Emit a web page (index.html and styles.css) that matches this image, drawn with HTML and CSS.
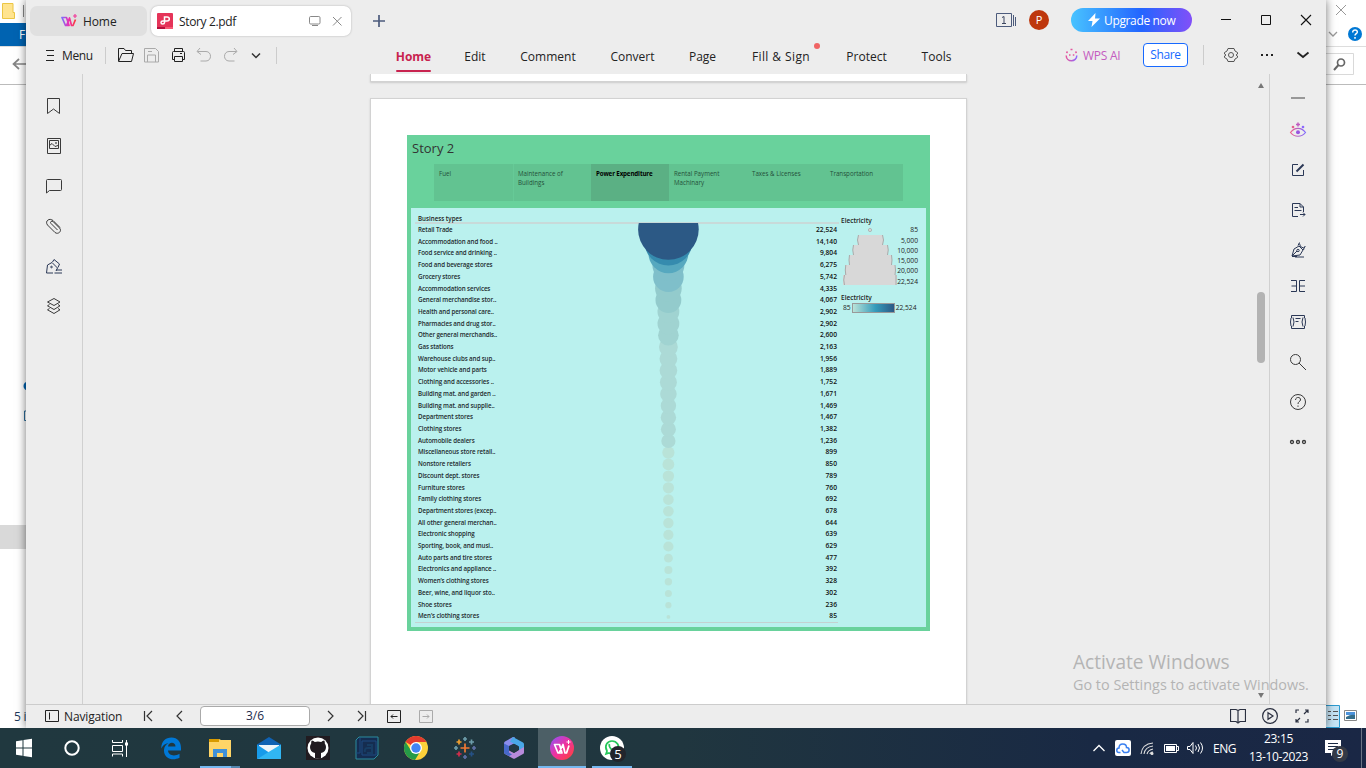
FILE: index.html
```html
<!DOCTYPE html>
<html lang="en">
<head>
<meta charset="utf-8">
<title>Story 2.pdf</title>
<link rel="stylesheet" href="styles.css">
</head>
<body>
<div class="desktop">

<section class="explorer">
  <div class="ex-title">
    <svg width="26" height="22" viewBox="0 0 26 22"><path d="M2.500 3.500h10.500v9h1.500v6h-12z" fill="#ffe48f" stroke="#ecc644"/><path d="M23.500 5v12" stroke="#888"/></svg>
    <svg width="40" height="22" viewBox="0 0 40 22"><path d="M10 5l10 10M20 5l-10 10" stroke="#999" fill="none"/></svg>
  </div>
  <div class="ex-ribbon">
    <span class="ex-file">File</span>
    <svg width="40" height="23" viewBox="0 0 40 23"><path d="M3 9l4 4 4-4" stroke="#999" fill="none" stroke-width="1.300"/><circle cx="29" cy="11" r="7" fill="#0078d4"/><path d="M26.700 9.500c0-3.600 4.900-3.200 4.600-.3-.2 1.500-2.300 1.500-2.300 3.300M29 14v1.700" stroke="#fff" stroke-width="1.500" fill="none"/></svg>
  </div>
  <div class="ex-address">
    <svg width="26" height="37" viewBox="0 0 26 37"><path d="M26 17H14m5-5l-5.500 5 5.500 5" fill="none" stroke="#858585" stroke-width="1.700"/></svg>
    <svg width="40" height="37" viewBox="0 0 40 37"><path d="M0 6.500h27.500v21H0" fill="none" stroke="#d9d9d9"/><circle cx="15" cy="15.500" r="3.500" fill="none" stroke="#666" stroke-width="1.700"/><path d="M12.500 18L8 23" stroke="#666" stroke-width="2"/></svg>
  </div>
  <div class="ex-body">
    <svg width="26" height="44" viewBox="0 0 26 44"><circle cx="28" cy="6" r="4.500" fill="#0063b1"/><path d="M24.500 31V40.500H28M24.500 31H28M24 44.500h3" stroke="#2b6e9d" fill="none"/></svg>
    <div class="ex-selected"></div>
  </div>
  <div class="ex-status">
    <span>5 items</span>
    <svg width="40" height="23" viewBox="0 0 40 23"><path d="M-1 .5h14.500v22H-1z" fill="#c5e4f5" stroke="#2c9bd0"/><path d="M2 6.500h3m2 0h5M2 10.500h3m2 0h5M2 14.500h3m2 0h5" stroke="#555"/><path d="M18.500 5.500h12v10h-12z" fill="#fff" stroke="#888"/><path d="M20 7h9v3h-9z" fill="#4c93db"/><path d="M20 12q5-3 9-2v4h-9z" fill="#356e8b"/></svg>
  </div>
</section>

<main class="app">
  <header class="titlebar">
    <div class="tab tab-home">
      <svg width="16" height="14" viewBox="0 0 16 14"><defs><linearGradient id="wg"><stop offset="0" stop-color="#7b6cff"/><stop offset=".5" stop-color="#f02db0"/><stop offset="1" stop-color="#fb3a3a"/></linearGradient></defs><path d="M1 3.500h4.500L8 11.500H4.500zM5.500 11.500L8.500 4l2 7.500h1.500L14.500 5.500" fill="none" stroke="url(#wg)" stroke-width="1.700" stroke-linejoin="round"/><path d="M14 0v4M12 2h4" stroke="#f03b9a" stroke-width="1.200"/></svg>
      <span>Home</span>
    </div>
    <div class="tab tab-doc">
      <svg width="16" height="16" viewBox="0 0 16 16"><rect width="16" height="16" rx="1" fill="#e53459"/><path d="M0 14h8v2H0z" fill="#b40f3c"/><path d="M8 14h8v2H8z" fill="#f85a74"/><path d="M7.500 10V4H10q2.300 0 2.300 2T10 8H5.800Q4 8 4 9.500T5.700 11q1.800 0 1.800-1.500" fill="none" stroke="#fff" stroke-width="1.500"/></svg>
      <span class="doc-name">Story 2.pdf</span>
      <svg width="12" height="12" viewBox="0 0 12 12" fill="none" stroke="#888"><rect x=".5" y="1.500" width="10.500" height="7.500" rx="1.200"/><path d="M3 10.500h6"/></svg>
      <svg width="10" height="10" viewBox="0 0 10 10" stroke="#888" fill="none"><path d="M1 1l8.500 8.500M9.500 1L1 9.500"/></svg>
    </div>
    <svg class="plus" width="12" height="12" viewBox="0 0 12 12"><path d="M6 0v12M0 6h12" stroke="#4c5b7c" stroke-width="1.700"/></svg>
    <div class="title-right">
      <svg width="21" height="14" viewBox="0 0 21 14" stroke="#4c5b7c" fill="none"><path d="M.5.500h15v13H.5zM17.500 2v11M19.500 4v9"/><path d="M6 4.500l2-1v7M6 10.500h4" stroke="#3c4660"/></svg>
      <span class="avatar">P</span>
      <div class="upgrade"><svg width="12" height="14" viewBox="0 0 12 14"><path d="M7.500 0L0 8h4.500L3.500 14 12 5.500H7z" fill="#fff"/></svg><span>Upgrade now</span></div>
      <div class="win-buttons">
        <svg width="40" height="40" viewBox="0 0 40 40"><path d="M15 19.500h10" stroke="#111"/></svg>
        <svg width="40" height="40" viewBox="0 0 40 40"><path d="M15.500 15.500h9v9h-9z" stroke="#111" fill="none"/></svg>
        <svg width="40" height="40" viewBox="0 0 40 40"><path d="M15 15l10 10M25 15L15 25" stroke="#111" stroke-width="1.100"/></svg>
      </div>
    </div>
  </header>

  <nav class="toolbar">
    <div class="menu"><svg width="9" height="11" viewBox="0 0 9 11"><path d="M0 .5h8M1 5.500h7M0 10.500h8" stroke="#222"/></svg><span>Menu</span></div>
    <div class="quick">
      <svg width="26" height="26" viewBox="0 0 26 26" stroke="#222"><path d="M5.500 19V6.500H11l1.500 2h6V11M5.500 19.500L9 11.500h11.500l-2 8z"/></svg>
      <svg width="26" height="26" viewBox="0 0 26 26" stroke="#aaa"><path d="M5.500 6.500h11l3 3v10.500h-14zM8.500 20v-7h8v7M9 9.500h4"/></svg>
      <svg width="26" height="26" viewBox="0 0 26 26" stroke="#222"><path d="M9.500 9.500V6.500h8v3M9.500 17.500h-2v-7q0-1 1-1h10q1 0 1 1v7h-2M9.500 14.500h8v5h-8zM15 11.500h2"/></svg>
      <svg width="26" height="26" viewBox="0 0 26 26" stroke="#aaa"><path d="M9 6L6 9.500l4 3M6.500 9.500H15c6 0 6 9.500 0 9.500h-5.500"/></svg>
      <svg width="26" height="26" viewBox="0 0 26 26" stroke="#aaa"><path d="M17 6l3 3.500-4 3M19.500 9.500H12c-6 0-6 9.500 0 9.500h5.500"/></svg>
      <svg width="26" height="26" viewBox="0 0 26 26" stroke="#333" stroke-width="1.500"><path d="M9 11.500l4 4 4-4"/></svg>
    </div>
    <div class="ribbon-tabs">
      <span class="active">Home</span><span>Edit</span><span>Comment</span><span>Convert</span><span>Page</span><span class="notice">Fill &amp; Sign</span><span>Protect</span><span>Tools</span>
    </div>
    <div class="wps-ai">
      <svg width="13" height="14" viewBox="0 0 13 14" fill="none"><defs><linearGradient id="ai"><stop offset="0" stop-color="#e4569f"/><stop offset="1" stop-color="#8d68ff"/></linearGradient></defs><path d="M1.200 7.500c0 7 10.600 7 10.600 0" stroke="url(#ai)" stroke-width="1.500"/><path d="M4 7h1.500M7.800 7h1.500M1.500 5l1-1.500M5.500 1.500h2M10.500 3.500l1 1.500" stroke="#e4569f" stroke-width="1.500"/></svg>
      <span>WPS AI</span>
    </div>
    <span class="share">Share</span>
    <div class="tool-right">
      <svg width="36" height="26" viewBox="0 0 36 26" stroke="#555" fill="none"><path d="M15 6.500h6l1 2.500 2.500 1.500V12l-1.500 1 1.500 1v1.500L22 17l-1 2.500h-6L14 17l-2.500-1.500V14l1.500-1-1.500-1v-1.500L14 9z"/><circle cx="18" cy="13" r="2.500"/></svg>
      <svg width="36" height="26" viewBox="0 0 36 26"><path d="M12 12h2v2h-2zM17 12h2v2h-2zM22 12h2v2h-2z" fill="#222"/></svg>
      <svg width="36" height="26" viewBox="0 0 36 26" stroke="#222" stroke-width="1.800" fill="none"><path d="M12.500 10.500l5.500 4.500 5.500-4.500"/></svg>
    </div>
  </nav>

  <div class="workspace">
    <aside class="left-bar">
      <svg width="20" height="40" viewBox="0 0 20 40"><path d="M4.500 12.500h12v15l-6-4.500-6 4.500z"/></svg>
      <svg width="20" height="40" viewBox="0 0 20 40"><path d="M4.500 12.500h13v15h-13zM6.500 14.500h9v8h-9zM6.500 19.500l2.500-2 3 3 3-1"/><circle cx="13" cy="17" r=".5"/></svg>
      <svg width="20" height="40" viewBox="0 0 20 40"><path d="M3.500 27V14.500q0-1 1-1h13q1 0 1 1v9q0 1-1 1H6.500z"/></svg>
      <svg width="20" height="40" viewBox="0 0 20 40"><path d="M14.500 24L8 17.500q-1-1 0-2t2 0l6.500 6.500c3 3-1.500 7-4.500 4.500L4.500 19c-3-4 2-7.500 5.500-4.500l7 7"/></svg>
      <svg class="navy" width="20" height="40" viewBox="0 0 20 40"><path d="M10 27H3.500l1-8 4.500-2.500 5.500 5.500-1.500 3M9.500 16l1.500-2.500 5.500 4.500-1.500 3.500M13 24h6M11.500 27h7.500"/><circle cx="8.500" cy="21" r=".8"/></svg>
      <svg width="20" height="40" viewBox="0 0 20 40"><path d="M11 12.500l6 3.500-6 3.500L4.500 16zM6.500 18.500l-2 1.300 6.500 3.700 6-3.700-2-1.300M6.500 22.500l-2 1.300 6.500 3.700 6-3.700-2-1.300"/></svg>
    </aside>

    <div class="viewport">
      <div class="page page-prev"></div>
      <div class="page page-current">
        <article class="story">
          <h1>Story 2</h1>
          <ul class="story-nav">
            <li>Fuel</li><li>Maintenance of Buildings</li><li class="current">Power Expenditure</li><li>Rental Payment Machinary</li><li>Taxes &amp; Licenses</li><li>Transportation</li>
          </ul>
          <div class="dash">
            <section class="chart">
              <div class="chart-head">Business types</div>
              <div class="chart-body">
                <ul class="labels">
                  <li>Retail Trade</li><li>Accommodation and food ..</li><li>Food service and drinking ..</li><li>Food and beverage stores</li><li>Grocery stores</li><li>Accommodation services</li><li>General merchandise stor..</li><li>Health and personal care..</li><li>Pharmacies and drug stor..</li><li>Other general merchandis..</li><li>Gas stations</li><li>Warehouse clubs and sup..</li><li>Motor vehicle and parts</li><li>Clothing and accessories ..</li><li>Building mat. and garden ..</li><li>Building mat. and supplie..</li><li>Department stores</li><li>Clothing stores</li><li>Automobile dealers</li><li>Miscellaneous store retail..</li><li>Nonstore retailers</li><li>Discount dept. stores</li><li>Furniture stores</li><li>Family clothing stores</li><li>Department stores (excep..</li><li>All other general merchan..</li><li>Electronic shopping</li><li>Sporting, book, and musi..</li><li>Auto parts and tire stores</li><li>Electronics and appliance ..</li><li>Women’s clothing stores</li><li>Beer, wine, and liquor sto..</li><li>Shoe stores</li><li>Men’s clothing stores</li>
                </ul>
                <svg class="bubbles" width="70" height="399" viewBox="0 0 70 399">
                  <g fill="#b9e3d8"><circle cx="35.400" cy="393.900" r="1.900"/><circle cx="35.400" cy="382.200" r="3.100"/><circle cx="35.400" cy="370.400" r="3.500"/><circle cx="35.400" cy="358.700" r="3.700"/><circle cx="35.400" cy="347" r="4"/><circle cx="35.400" cy="335.200" r="4.400"/><circle cx="35.400" cy="323.500" r="5.100"/><circle cx="35.400" cy="311.800" r="5.100"/><circle cx="35.400" cy="300" r="5.200"/><circle cx="35.400" cy="288.300" r="5.300"/><circle cx="35.400" cy="276.600" r="5.300"/><circle cx="35.400" cy="264.800" r="5.600"/><circle cx="35.400" cy="253.100" r="5.700"/><circle cx="35.400" cy="241.400" r="5.900"/><circle cx="35.400" cy="229.600" r="6.100"/></g>
                  <g fill="#acdad6"><circle cx="35.400" cy="217.900" r="7.100"/><circle cx="35.400" cy="206.200" r="7.500"/><circle cx="35.400" cy="194.500" r="7.700"/><circle cx="35.400" cy="182.700" r="7.700"/><circle cx="35.400" cy="171" r="8.300"/><circle cx="35.400" cy="159.200" r="8.500"/><circle cx="35.400" cy="147.500" r="8.800"/><circle cx="35.400" cy="135.800" r="8.900"/><circle cx="35.400" cy="124" r="9.400"/></g>
                  <g fill="#a0d3d1"><circle cx="35.400" cy="112.300" r="10.300"/><circle cx="35.400" cy="100.600" r="10.900"/><circle cx="35.400" cy="88.800" r="10.900"/></g>
                  <g fill="#93cbcc"><circle cx="35.400" cy="77.100" r="12.900"/><circle cx="35.400" cy="65.400" r="13.300"/></g>
                  <g fill="#7fbfca"><circle cx="35.400" cy="53.700" r="15.300"/><circle cx="35.400" cy="42" r="16"/></g>
                  <circle cx="35.400" cy="30.200" r="20" fill="#56a8bf"/><circle cx="35.400" cy="18.500" r="24" fill="#358bae"/><circle cx="35.400" cy="6.500" r="30.300" fill="#2c5985"/>
                </svg>
                <ul class="values">
                  <li>22,524</li><li>14,140</li><li>9,804</li><li>6,275</li><li>5,742</li><li>4,335</li><li>4,067</li><li>2,902</li><li>2,902</li><li>2,600</li><li>2,163</li><li>1,956</li><li>1,889</li><li>1,752</li><li>1,671</li><li>1,469</li><li>1,467</li><li>1,382</li><li>1,236</li><li>899</li><li>850</li><li>789</li><li>760</li><li>692</li><li>678</li><li>644</li><li>639</li><li>629</li><li>477</li><li>392</li><li>328</li><li>302</li><li>236</li><li>85</li>
                </ul>
              </div>
            </section>
            <aside class="legend">
              <h2>Electricity</h2>
              <div class="size-legend">
                <svg width="56" height="64" viewBox="0 0 56 64"><circle cx="29" cy="5" r="1.600" fill="#d8d8d8" stroke="#aaa" stroke-width=".8"/><g fill="#d8d8d8"><path d="M17 10h25v10H17zM12 20h35v10H12zM8 30h43v10H8zM4 40h50v10H4zM2 50h54v10H2z"/></g><path d="M17.500 10q-2 5 0 10M41.500 10q2 5 0 10M12.500 20q-1.500 5 0 10M46.500 20q1.500 5 0 10M8.500 30q-1 5 0 10M50.500 30q1 5 0 10M4.800 40q-1 5 0 10M54 40q1 5 0 10M3.500 50q-1.500 5 0 10M55 50v10" fill="none" stroke="#aaa"/></svg>
                <ul><li>85</li><li>5,000</li><li>10,000</li><li>15,000</li><li>20,000</li><li>22,524</li></ul>
              </div>
              <h2>Electricity</h2>
              <div class="color-legend"><span>85</span><i></i><span>22,524</span></div>
            </aside>
          </div>
        </article>
      </div>
    </div>

    <div class="scroll">
      <svg width="6" height="5" viewBox="0 0 6 5"><path d="M0 5L3 0l3 5z" fill="#777"/></svg>
      <i class="thumb"></i>
      <svg width="6" height="5" viewBox="0 0 6 5"><path d="M0 0l3 5 3-5z" fill="#777"/></svg>
    </div>

    <aside class="right-bar">
      <svg width="20" height="16" viewBox="0 0 20 16"><path d="M3 8h14" stroke="#888" stroke-width="1.700"/></svg>
      <svg width="20" height="48" viewBox="0 0 20 48" stroke="none"><defs><linearGradient id="eye"><stop offset="0" stop-color="#f0608c"/><stop offset="1" stop-color="#7b68ff"/></linearGradient></defs><g class="plain"><path d="M2.500 26.500c4-5.500 11-5.500 15 0-4 5-11 5-15 0z" fill="none" stroke="url(#eye)" stroke-width="1.200"/><circle cx="10" cy="26.300" r="2" fill="#9a55df"/><path d="M10 16.500v4M8 18.500h4" stroke="#c05bc0" stroke-width="1.500"/><circle cx="5" cy="21" r="1.300" fill="#e5608e"/><circle cx="15" cy="21" r="1.300" fill="#8c68ff"/></g></svg>
      <svg class="navy" width="20" height="32" viewBox="0 0 20 32"><path d="M10 10.500H4.500v11h11V16"/><path d="M8.500 17.500l7-7" stroke-width="1.900"/></svg>
      <svg class="navy" width="20" height="48" viewBox="0 0 20 48"><path d="M10 30.500H4.500v-13H12l3.500 3.500v5M12 17.500V21h3.500M6.500 21.500H10M6.500 24.500h7M12 28.500h5M15 26.500l2 2-2 2"/></svg>
      <svg class="navy" width="20" height="34" viewBox="0 0 20 34"><path d="M4 22l2-7 5-3 4 4-3 5zM4 22l5-5M10 11.500l1.500-3M15.500 16l1-3.500M7 23h9M4 22.500h5M11.500 9.500l1 3 3 1.500 2-1.500"/><circle cx="10" cy="16.500" r="1.200"/></svg>
      <svg class="navy" width="20" height="36" viewBox="0 0 20 36"><path d="M3 12.500h5.500v11H3M3.500 18H8M17 12.500h-5.500v11H17M12 18h5"/></svg>
      <svg class="navy" width="20" height="36" viewBox="0 0 20 36"><path d="M3.500 14v-2.500h13V14M3.500 22v2.500h13V22M5 13.500q2 4.500 0 9M15 13.500q-2 4.500 0 9M3 14q-1 4 0 8M17 14q1 4 0 8M7.500 14.500h5M7.500 17.500h3"/></svg>
      <svg width="20" height="44" viewBox="0 0 20 44"><circle cx="7.500" cy="19.500" r="5"/><path d="M11 23l7 7"/></svg>
      <svg width="20" height="36" viewBox="0 0 20 36"><circle cx="10" cy="18" r="7.500"/><path d="M7.500 16c0-3.500 5.500-3.300 5 0-.3 1.700-2.500 1.500-2.500 4M10 21.500v1.300"/></svg>
      <svg width="20" height="44" viewBox="0 0 20 44" stroke-width="1.300"><circle cx="4" cy="22" r="1.500"/><circle cx="10" cy="22" r="1.500"/><circle cx="16" cy="22" r="1.500"/></svg>
    </aside>
  </div>

  <footer class="statusbar">
    <svg width="14" height="12" viewBox="0 0 14 12" stroke="#222" fill="none"><path d="M.5.500h13v11H.5zM4.500 2.500v7"/></svg>
    <span class="nav-label">Navigation</span>
    <svg class="first" width="10" height="12" viewBox="0 0 10 12" stroke="#333" fill="none"><path d="M1.500 1v10M9 1L4 6l5 5" stroke-width="1.200"/></svg>
    <svg class="prev" width="7" height="12" viewBox="0 0 7 12" stroke="#333" fill="none"><path d="M6 1L1 6l5 5" stroke-width="1.200"/></svg>
    <span class="page-no">3/6</span>
    <svg class="next" width="7" height="12" viewBox="0 0 7 12" stroke="#333" fill="none"><path d="M1 1l5 5-5 5" stroke-width="1.200"/></svg>
    <svg class="last" width="10" height="12" viewBox="0 0 10 12" stroke="#333" fill="none"><path d="M8.500 1v10M1 1l5 5-5 5" stroke-width="1.200"/></svg>
    <svg class="back" width="14" height="13" viewBox="0 0 14 13" stroke="#222" fill="none"><path d="M.5.500h13v12H.5zM10.500 6.500H4M6 4.500l-2 2 2 2"/></svg>
    <svg class="forward" width="14" height="13" viewBox="0 0 14 13" stroke="#aaa" fill="none"><path d="M.5.500h13v12H.5zM3.500 6.500H10M8 4.500l2 2-2 2"/></svg>
    <div class="view-icons">
      <svg width="16" height="16" viewBox="0 0 16 16"><path d="M8 2.500L6 1.500H.5v12H6l2 1.500 2-1.500h5.500v-12H10zM8 2.500V14"/></svg>
      <svg width="16" height="16" viewBox="0 0 16 16"><circle cx="8" cy="8" r="7.400"/><path d="M6 4.700l5 3.300-5 3.300z"/></svg>
      <svg width="16" height="16" viewBox="0 0 16 16"><path d="M2 5V2h3M11 2h3v3M14 11v3h-3M5 14H2v-3M10 6l3.500-3.500M2.500 13.500L6 10"/></svg>
    </div>
  </footer>
</main>

<div class="watermark"><p class="wm-title">Activate Windows</p><p class="wm-sub">Go to Settings to activate Windows.</p></div>

<footer class="taskbar">
  <div class="system-apps">
    <svg width="48" height="40" viewBox="0 0 48 40"><path d="M16 13.200l6.500-1v7.300H16zM23.500 12l8.500-1.200v8.700h-8.500zM16 20.500h6.500v7.300l-6.500-1zM23.500 20.500H32v8.700l-8.500-1.200z" fill="#fff"/></svg>
    <svg width="48" height="40" viewBox="0 0 48 40"><circle cx="24" cy="20" r="6.700" fill="none" stroke="#fff" stroke-width="2"/></svg>
    <svg width="48" height="40" viewBox="0 0 48 40"><path d="M16.500 12v2.500h10V12M16.500 17.500h10v6h-10zM16.500 28.500v-2.500h10v2.500M30.500 12v17" fill="none" stroke="#fff"/><path d="M29 14.500h3v3h-3z" fill="#fff"/></svg>
  </div>
  <div class="pinned">
    <span><svg width="24" height="24" viewBox="0 0 24 24"><path d="M2.200 12.500C2.500 5 6.500 1.500 12.500 1.500c6 0 9.500 4.500 9.500 10.500v2.500H9c.5 5.500 7 6 11.500 3.300v4C13 25.500 4.500 22 5 13.800 5.300 10.500 7 8.500 9.500 7 6 7.500 3.800 9.500 2.200 12.500zM9 10.500h7.500C16.500 5.500 9.500 5.500 9 10.500z" fill="#0078d7"/></svg></span>
    <span class="running grouped"><svg width="24" height="24" viewBox="0 0 24 24"><path d="M1 3h10l2 1h10v17H1z" fill="#ffd567"/><path d="M1 3h10v3H1z" fill="#d99b00"/><path d="M5 21v-8h14v8h-4v-4H9v4z" fill="#3f91d8"/></svg></span>
    <span><svg width="26" height="24" viewBox="0 0 26 24"><path d="M1 8.500L13 1l12 7.500V23H1z" fill="#0f62b4"/><path d="M3 9h20v8H3z" fill="#edf4fa"/><path d="M1 8.500l12 8L1 23z" fill="#179bea"/><path d="M25 8.500L1 23h24z" fill="#31b6f3"/></svg></span>
    <span><svg width="24" height="24" viewBox="0 0 24 24"><path d="M0 0h24v24H0z" fill="#211b20"/><circle cx="12" cy="12" r="10.500" fill="#fff"/><path d="M9 22v-5q-5-1-5-6 0-2 1.200-3.500Q5 5.500 5.800 4.500q1.700.3 3 1.500 3-.8 6.400 0 1.300-1.200 3-1.500.8 1 .6 3Q20 9 20 11q0 5-5 6v5.500q-3 .5-6-.5z" fill="#211b20"/></svg></span>
    <span><svg width="24" height="24" viewBox="0 0 24 24"><path d="M4 1h19v18l-4 4H1V4z" fill="#152d50" stroke="#2b8c9f"/><path d="M5 2v15H1M21 5H7v14h14z" fill="none" stroke="#1f4a80"/><path d="M10 16q-1-4 3-4h4v5h-5M12 9h5v3" fill="none" stroke="#173d63" stroke-width="2"/></svg></span>
    <span><svg width="24" height="24" viewBox="0 0 24 24"><circle cx="12" cy="12" r="12" fill="#fdd13a"/><path d="M12 12L1.600 6A12 12 0 0 1 22.400 6H12z" fill="#e33b2e"/><path d="M1.600 6A12 12 0 0 0 11 24l5.500-9L12 12 7 14.500z" fill="#259b48"/><circle cx="12" cy="12" r="6" fill="#fff"/><circle cx="12" cy="12" r="4.700" fill="#4285f4"/></svg></span>
    <span><svg width="24" height="24" viewBox="0 0 24 24" fill="none" stroke-width="1.700"><path d="M12 7.500v9M7.500 12h9" stroke="#f07833"/><path d="M12 1v4M10 3h4M18.500 3.500v5M16 6h5" stroke="#6d9daa"/><path d="M6 3.500v5M3.500 6h5" stroke="#f0a030"/><path d="M3 10v4M1 12h4" stroke="#6d9daa"/><path d="M21 10v4M19 12h4M12 19v4M10 21h4" stroke="#5f6fa5"/><path d="M6 15.500v5M3.500 18h5" stroke="#d42d4c"/><path d="M18.500 15.500v5M16 18h5" stroke="#255186"/></svg></span>
    <span><svg width="24" height="24" viewBox="0 0 24 24"><path d="M11 1L3 5.500Q2 6 2 7.500V16l5 3V10l6-3V1.500z" fill="#8b8cec"/><path d="M11 1l10 5.500q1 .5 1 2V13l-5 3v-5.500L8 5.500z" fill="#4aa8e8"/><path d="M22 11v5.500q0 1-1 1.500l-8 4.500q-1 .5-2 0L3 18q-1-.5-1-2l5-1.500 5 2.500z" fill="#b88bdc"/><path d="M2 7.500L7 10v6.500l3 2-3 1.500-4-2q-1-.5-1-2z" fill="#4668c9"/><path d="M12 8l4 2v4.500l-4 2.300-4-2.300V10z" fill="#233944"/></svg></span>
    <span class="running focused"><svg width="24" height="24" viewBox="0 0 24 24"><defs><linearGradient id="wc" x1="0" y1="0" x2="1" y2="1"><stop offset="0" stop-color="#8854ff"/><stop offset=".5" stop-color="#f0319e"/><stop offset="1" stop-color="#ff442e"/></linearGradient></defs><circle cx="12" cy="12" r="12" fill="url(#wc)"/><path d="M4.500 8.500h5L12 17H8zM9 17l4-8.500 2 8.500h1.500L19 9.500" fill="none" stroke="#fff" stroke-width="1.700" stroke-linejoin="round"/><path d="M18.500 4v4M16.500 6h4" stroke="#fff"/></svg></span>
    <span class="running chat"><svg width="24" height="24" viewBox="0 0 24 24"><circle cx="12" cy="12" r="12" fill="#fff"/><path d="M6 18l1-3c-3-5 0-10 5-10s8 5 6 9-6 5-9 3z" fill="none" stroke="#25c75a" stroke-width="1.700"/><path d="M9.500 8q-1 2 1.500 5t5 2" fill="none" stroke="#25c75a" stroke-width="1.700"/></svg><b class="badge">5</b></span>
  </div>
  <div class="tray">
    <svg width="24" height="24" viewBox="0 0 24 24" fill="none" stroke="#fff" stroke-width="1.300"><path d="M6.500 15l5.500-5.500 5.500 5.500"/></svg>
    <svg width="24" height="24" viewBox="0 0 24 24"><rect x="4" y="4" width="16" height="16" rx="2" fill="#fff"/><path d="M9.500 16.500H8c-3 0-3-4.500 0-4.500 0-5.500 7.500-5 7.500-.5 3.500 0 3.500 5 0 5h-2.500L11 14" fill="none" stroke="#3a80f0" stroke-width="1.500"/></svg>
    <svg width="24" height="24" viewBox="0 0 24 24" fill="none" stroke="#ddd" stroke-width="1.100"><path d="M6 18Q7 8 18 7M9 18q1-7 9-8M12 18q1-4 6-5M15 18q0-1.500 3-2"/><circle cx="17" cy="17.500" r="1" fill="#fff"/></svg>
    <svg width="24" height="24" viewBox="0 0 24 24" fill="none" stroke="#fff"><path d="M5.500 8.500h12v8h-12zM18 10.500h1.500v4H18"/><path d="M7 10h9v5H7z" fill="#fff" stroke="none"/></svg>
    <svg width="24" height="24" viewBox="0 0 24 24" fill="none" stroke="#fff"><path d="M4.500 10.500H7l3-4v11l-3-4H4.500zM12.500 9.500q2 2.500 0 5M15 8q3 4 0 8M17.500 6.500q4 5.500 0 11"/></svg>
    <span class="lang">ENG</span>
    <div class="clock"><span>23:15</span><span>13-10-2023</span></div>
    <div class="notes"><svg width="18" height="18" viewBox="0 0 18 18"><path d="M1 1h16v13h-6l-4 3v-3H1z" fill="#fff"/><path d="M4 4.500h10M4 7.500h10M4 10.500h7" stroke="#1b2b45"/></svg><b class="count">9</b></div>
    <i class="peek"></i>
  </div>
</footer>
</div>
</body>
</html>
```
FILE: styles.css
```css
* { box-sizing: border-box; }
body { margin: 0; font-family: "Open Sans", "Noto Sans", sans-serif; font-size: 12px; color: #222; }
ul, h1, h2, p { margin: 0; padding: 0; list-style: none; font-weight: 400; }
svg { display: block; flex: none; }
.desktop { position: relative; width: 1366px; height: 768px; overflow: hidden; background: #fff; }

/* file explorer behind the app */
.explorer { position: absolute; left: 0; top: 0; width: 1366px; height: 728px; display: flex; flex-direction: column; background: #fff; }
.ex-title, .ex-ribbon, .ex-address, .ex-status { display: flex; justify-content: space-between; flex: none; }
.ex-title { height: 23px; }
.ex-ribbon { height: 24px; border-bottom: 1px solid #ddd; }
.ex-file { width: 56px; padding-left: 19px; background: #0063b1; color: #fff; line-height: 23px; }
.ex-address { height: 38px; border-bottom: 1px solid #bbb; }
.ex-body { flex: 1; padding-top: 295px; }
.ex-selected { margin-top: 101px; height: 24px; width: 120px; background: #d9d9d9; }
.ex-status { height: 23px; padding-left: 14px; color: #1e395b; line-height: 23px; letter-spacing: -.3px; }

/* app window */
.app { position: absolute; left: 26px; top: 0; width: 1300px; height: 728px; display: flex; flex-direction: column; background: #ededed; box-shadow: 0 0 9px rgba(0,0,0,.55); }
.titlebar { height: 40px; display: flex; align-items: center; padding-left: 4px; flex: none; }
.tab { display: flex; align-items: center; border-radius: 7px; }
.tab-home { width: 117px; height: 30px; background: #e0e0e0; padding-left: 31px; gap: 6px; margin-top: 2px; letter-spacing: -.1px; }
.tab-doc { width: 200px; height: 30px; margin: 2px 0 0 4px; padding-left: 6px; background: #fff; box-shadow: 0 0 2px #aaa; }
.doc-name { width: 131px; margin-left: 6px; margin-right: 0; letter-spacing: -.35px; }
.tab-doc svg:first-child + span + svg { margin-left: -1px; }
.tab-doc svg:last-child { margin-left: 11px; }
.plus { margin-left: 22px; margin-top: 2px; }
.title-right { margin-left: auto; display: flex; align-items: center; }
.avatar { width: 20px; height: 20px; border-radius: 50%; background: #be370d; color: #fff; text-align: center; line-height: 20px; font-size: 11px; margin: 0 22px 0 12px; }
.upgrade { width: 121px; height: 24px; border-radius: 12px; display: flex; align-items: center; padding-left: 17px; gap: 4px; color: #fff; background: linear-gradient(90deg, #48c3ff, #2365ff 58%, #8250f8); letter-spacing: -.35px; }
.win-buttons { display: flex; margin-left: 14px; }

.toolbar { height: 34px; display: flex; align-items: center; flex: none; padding-bottom: 4px; }
.menu { width: 80px; height: 17px; padding-left: 20px; display: flex; align-items: center; gap: 7px; border-right: 1px solid #ccc; letter-spacing: -.35px; }
.quick { display: flex; width: 171px; height: 17px; align-items: center; padding-left: 7px; border-right: 1px solid #ccc; }
.quick svg { fill: none; }
.ribbon-tabs { display: grid; grid-template-columns: 59px 64px 82px 87px 53px 104px 67px 73px; margin-left: 107px; text-align: center; height: 30px; line-height: 34px; }
.ribbon-tabs .active { color: #c8234f; font-weight: 700; letter-spacing: -.05px; position: relative; }
.active::after { content: ""; position: absolute; left: 12px; right: 12px; bottom: 2px; height: 2px; background: #c8234f; border-radius: 1px; }
.ribbon-tabs .notice { position: relative; letter-spacing: .4px; }
.notice::after { content: ""; position: absolute; right: 13px; top: 3px; width: 6px; height: 6px; border-radius: 50%; background: #f06464; }
.wps-ai { display: flex; gap: 5px; align-items: center; margin-left: 92px; width: 78px; color: #c45bc0; letter-spacing: -.25px; }
.share { width: 45px; height: 24px; border: 1px solid #1769ff; border-radius: 4px; background: #fff; color: #1769ff; text-align: center; line-height: 22px; letter-spacing: -.4px; }
.tool-right { display: flex; margin-left: 15px; height: 20px; padding-left: 9px; border-left: 1px solid #ccc; align-items: center; }

.workspace { flex: 1; min-height: 0; display: flex; }
.left-bar { width: 57px; border-right: 1px solid #d0d0d0; padding: 12px 0 0 17px; }
.left-bar svg, .right-bar svg { fill: none; stroke: #3a3a3a; }
.right-bar .plain { stroke: none; }
.left-bar .navy, .right-bar .navy { stroke: #2b3856; }
.viewport { flex: 1; overflow: hidden; padding-left: 287px; display: flex; flex-direction: column; }
.page { width: 597px; border: 1px solid #d2d2d2; background: #fff; box-shadow: 0 1px 2px #ccc; }
.page-prev { height: 8px; border-top: 0; flex: none; }
.page-current { margin-top: 16px; flex: 1; border-bottom: 0; padding: 36px 0 0 36px; }
.scroll { width: 14px; display: flex; flex-direction: column; align-items: center; padding: 9px 3px 6px 0; }
.thumb { width: 8px; height: 71px; border-radius: 4px; background: #b3b3b3; margin: 204px 0 auto; }
.right-bar { width: 57px; border-left: 1px solid #d0d0d0; padding: 16px 0 0 18px; }

/* story */
.story { width: 523px; height: 496px; background: #69d29c; padding: 5px 4px 4px; font-size: 6.200px; }
.story h1 { font-size: 13px; line-height: 17px; height: 24px; padding-left: 1px; color: #333; }
.story-nav { display: grid; grid-template-columns: 79px 78px 78px 78px 78px 78px; height: 37px; margin: 0 23px; background: #62c391; line-height: 9px; color: #24503a; }
.story-nav li { padding: 5px 22px 0 4px; border-left: 1px solid #66ca97; white-space: normal; }
.story-nav li:nth-child(n+4), .story-nav li:first-child { border-color: #62c391; }
.story-nav .current { background: #5bb084; border-color: #5bb084; color: #000; font-weight: 700; padding-right: 0; letter-spacing: -.13px; }
.dash { display: flex; margin-top: 7px; height: 419px; background: #baf1ee; }
.chart { width: 428px; }
.chart-head { height: 16px; margin-left: 4px; padding: 6px 0 0 3px; line-height: 9px; border-bottom: 2px solid #c8dad9; font-weight: 600; }
.chart-body { display: grid; grid-template-columns: 215px 70px 137px; width: 423px; margin-left: 4px; height: 399px; border-bottom: 1px solid #c4d1d0; }
.labels, .values { display: grid; grid-template-rows: repeat(34, 1fr); line-height: 11px; font-weight: 600; }
.labels { padding-left: 3px; color: #1f2c2e; letter-spacing: -.1px; }
.values { text-align: right; color: #111; font-size: 6.700px; }
.bubbles { margin-left: 3px; margin-top: -1px; overflow: hidden; }
.legend { width: 87px; padding: 8px 8px 0 2px; }
.legend h2 { font-size: 6.500px; line-height: 9px; font-weight: 600; }
.size-legend { display: flex; height: 68px; }
.size-legend ul { width: 21px; display: grid; grid-template-rows: 10.500px repeat(5, 10.300px); text-align: right; font-size: 6.700px; line-height: 10.500px; }
.size-legend li { justify-self: end; }
.color-legend { display: flex; align-items: center; gap: 1px; font-size: 6.700px; line-height: 10px; padding: 1px 0 0 2px; }
.color-legend i { width: 43px; height: 10px; border: 1px solid #999; background: linear-gradient(90deg, #b9e3d8, #349bbb 55%, #2c5985); }

.statusbar { height: 24px; flex: none; display: flex; align-items: center; padding: 0 0 1px 19px; border-top: 1px solid #ccc; }
.nav-label { width: 79px; margin-left: 5px; letter-spacing: -.15px; }
.prev { margin-left: 23px; }
.page-no { width: 110px; height: 20px; margin: 0 17px; border: 1px solid #aaa; border-radius: 4px; background: #fff; text-align: center; line-height: 18px; color: #1c2b4b; }
.last { margin-left: 23px; }
.back { margin-left: 20px; }
.forward { margin-left: 18px; }
.view-icons { display: flex; gap: 16px; margin-left: auto; padding-right: 16px; }
.view-icons svg { fill: none; stroke: #2b3040; stroke-width: 1.200; }

.watermark { position: absolute; left: 1073px; top: 650px; color: #b4b4b4; }
.wm-title { font-size: 19.100px; line-height: 24px; }
.wm-sub { font-size: 14.400px; line-height: 21px; }

/* taskbar */
.taskbar { position: absolute; left: 0; bottom: 0; width: 1366px; height: 40px; display: flex; background: linear-gradient(90deg, #20383f, #20363f 50%, #192944 80%, #1a2745); color: #fff; }
.system-apps { display: flex; width: 146px; }
.pinned { display: grid; grid-template-columns: repeat(10, 49px); }
.pinned span { position: relative; display: flex; align-items: center; justify-content: center; }
.running::after { content: ""; position: absolute; bottom: 0; left: 5px; right: 4px; height: 2px; background: #75b8f0; }
.grouped::after { background: linear-gradient(90deg, #75b8f0 31px, #5486ae 31px); }
.pinned .focused { background: #4c5f66; margin-right: 1px; }
.focused::after { left: 0; right: 0; }
.badge, .count { position: absolute; width: 16px; height: 16px; border-radius: 50%; background: #22252c; text-align: center; font-weight: 400; font-size: 13px; line-height: 16px; left: 23px; top: 18px; }
.tray { display: flex; align-items: center; margin-left: auto; }
.lang { width: 31px; padding-left: 6px; letter-spacing: -.5px; }
.clock { width: 82px; display: flex; flex-direction: column; align-items: center; line-height: 18px; letter-spacing: -.35px; padding-right: 1px; }
.notes { position: relative; width: 41px; padding-left: 4px; }
.notes .count { left: 12px; top: 7px; background: #343a46; font-size: 12px; }
.peek { width: 5px; height: 40px; border-left: 1px solid #6a7485; }
```
